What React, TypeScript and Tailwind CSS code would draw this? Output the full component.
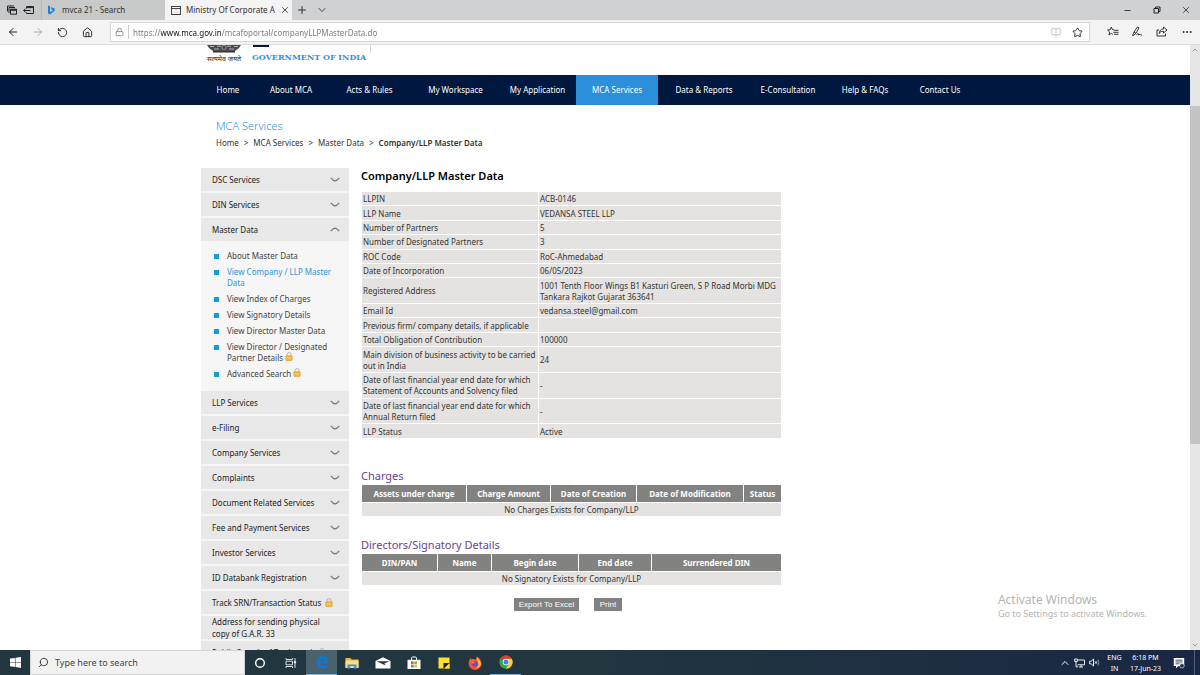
import React, { useState } from 'react';
import {
  ArrowLeft,
  ArrowRight,
  BookOpen,
  ChevronDown,
  ChevronUp,
  Home,
  Lock,
  Minus,
  MoreHorizontal,
  Plus,
  RotateCw,
  Search,
  Star,
  X,
} from 'lucide-react';

const navItems = [
  { label: 'Home', width: 'w-[54px]' },
  { label: 'About MCA', width: 'w-[72px]' },
  { label: 'Acts & Rules', width: 'w-[85px]' },
  { label: 'My Workspace', width: 'w-[87px]' },
  { label: 'My Application', width: 'w-[77px]' },
  { label: 'MCA Services', width: 'w-[82px]', active: true },
  { label: 'Data & Reports', width: 'w-[92px]' },
  { label: 'E-Consultation', width: 'w-[76px]' },
  { label: 'Help & FAQs', width: 'w-[78px]' },
  { label: 'Contact Us', width: 'w-[72px]' },
];

const subItems = [
  { label: 'About Master Data' },
  { label: 'View Company / LLP Master Data', active: true },
  { label: 'View Index of Charges' },
  { label: 'View Signatory Details' },
  { label: 'View Director Master Data' },
  { label: 'View Director / Designated Partner Details', locked: true },
  { label: 'Advanced Search', locked: true },
];

const lowerMenu = [
  'LLP Services',
  'e-Filing',
  'Company Services',
  'Complaints',
  'Document Related Services',
  'Fee and Payment Services',
  'Investor Services',
  'ID Databank Registration',
];

const masterData = [
  ['LLPIN', 'ACB-0146'],
  ['LLP Name', 'VEDANSA STEEL LLP'],
  ['Number of Partners', '5'],
  ['Number of Designated Partners', '3'],
  ['ROC Code', 'RoC-Ahmedabad'],
  ['Date of Incorporation', '06/05/2023'],
  ['Registered Address', '1001 Tenth Floor Wings B1 Kasturi Green, S P Road Morbi MDG Tankara Rajkot Gujarat 363641'],
  ['Email Id', 'vedansa.steel@gmail.com'],
  ['Previous firm/ company details, if applicable', ''],
  ['Total Obligation of Contribution', '100000'],
  ['Main division of business activity to be carried out in India', '24'],
  ['Date of last financial year end date for which Statement of Accounts and Solvency filed', '-'],
  ['Date of last financial year end date for which Annual Return filed', '-'],
  ['LLP Status', 'Active'],
];

const chargeColumns = [
  { label: 'Assets under charge', width: 'w-[104px]' },
  { label: 'Charge Amount', width: 'w-[83px]' },
  { label: 'Date of Creation', width: 'w-[85px]' },
  { label: 'Date of Modification', width: 'w-[106px]' },
  { label: 'Status', width: 'w-[37px]' },
];

const directorColumns = [
  { label: 'DIN/PAN', width: 'w-[75px]' },
  { label: 'Name', width: 'w-[53px]' },
  { label: 'Begin date', width: 'w-[86px]' },
  { label: 'End date', width: 'w-[72px]' },
  { label: 'Surrendered DIN', width: 'w-[129px]' },
];

const Padlock = () => (
  <svg viewBox="0 0 8 9" className="inline-block w-2 h-[9px] shrink-0 align-baseline">
    <path d="M2 4V2.6a2 2 0 0 1 4 0V4" fill="none" stroke="#b9b4a4" strokeWidth="1" />
    <rect x="0.8" y="3.8" width="6.4" height="4.6" rx="0.5" fill="#f3b62f" stroke="#c98d1c" strokeWidth="0.5" />
    <path d="M1.4 5.3h5.2M1.4 6.8h5.2" stroke="#fbdc83" strokeWidth="0.6" />
  </svg>
);

const MenuChevron = ({ up = false }: { up?: boolean }) => (
  <svg viewBox="0 0 10 5" className="w-[10px] h-[5px] shrink-0" fill="none" stroke="#777" strokeWidth="1.2">
    <path d={up ? 'M0.8 4.2Q3 1.4 5 1.2Q7 1.4 9.2 4.2' : 'M0.8 0.8Q3 3.6 5 3.8Q7 3.6 9.2 0.8'} />
  </svg>
);

const TitleBar = () => (
  <div className="flex h-5 shrink-0 bg-[#d0d1d2] text-[8px] text-[#333]">
    <div className="flex w-[41px] items-center justify-around bg-[#c6c8c9] px-1">
      <button aria-label="Tabs you've set aside">
        <svg viewBox="0 0 10 10" className="w-[10px] h-[10px]" fill="none" stroke="#222">
          <path d="M0.5 6.5V1h6.5M2 8V2.5h6" />
          <path d="M3.5 4.2h6v5h-6z" />
          <path d="M3.5 5h6" strokeWidth="1.6" />
        </svg>
      </button>
      <button aria-label="Set these tabs aside">
        <svg viewBox="0 0 11 10" className="w-[11px] h-[10px]" fill="none" stroke="#222">
          <path d="M3.5 3.5V1.5h7v7h-7V7.5M3.5 2.6h7" />
          <path d="M7.5 5.5h-7M2.5 3.7L0.7 5.5l1.8 1.8" />
        </svg>
      </button>
    </div>
    <button className="flex w-[124px] items-center gap-[7px] border-l border-[#b8babb] bg-[#c8caca] px-[5px]">
      <svg viewBox="0 0 8 10" className="w-2 h-[10px]">
        <path d="M1 0.5L3 1.2V7l3.2-1.8-1.6-.8-.9-2.2 4 1.4v2.1L3 9.6 1 8.4z" fill="#1c7fd8" />
      </svg>
      <span>mvca 21 - Search</span>
    </button>
    <div className="flex w-[127px] items-center gap-[5px] bg-[#f3f3f3] px-[6px]">
      <svg viewBox="0 0 10 9" className="w-[10px] h-[9px] shrink-0" fill="none" stroke="#444">
        <rect x="0.5" y="0.5" width="9" height="8" />
        <path d="M0.5 2.5h9" />
      </svg>
      <span className="flex-1 whitespace-nowrap">Ministry Of Corporate A</span>
      <button aria-label="Close tab" className="shrink-0">
        <X className="w-[10px] h-[10px]" strokeWidth={2} />
      </button>
    </div>
    <button aria-label="New tab" className="flex w-5 items-center justify-center">
      <Plus className="w-3 h-3" strokeWidth={2} />
    </button>
    <button aria-label="Tab previews" className="flex w-5 items-center justify-center">
      <ChevronDown className="w-3 h-3" strokeWidth={1.8} />
    </button>
    <div className="ml-auto flex">
      <button aria-label="Minimize" className="flex w-[29px] items-center justify-center">
        <Minus className="w-[9px] h-[9px]" strokeWidth={2.5} />
      </button>
      <button aria-label="Restore" className="flex w-[29px] items-center justify-center">
        <svg viewBox="0 0 8 8" className="w-2 h-2" fill="none" stroke="#222">
          <path d="M1 2.5h4.5V7H1zM2.5 2.3V1H7v4.500H5.700" />
        </svg>
      </button>
      <button aria-label="Close" className="flex w-[29px] items-center justify-center">
        <X className="w-[10px] h-[10px]" strokeWidth={2} />
      </button>
    </div>
  </div>
);

const AddressBar = () => (
  <div className="flex h-[25px] shrink-0 items-center border-b border-[#dcdcdc] bg-[#f3f3f3] text-[#222]">
    <button aria-label="Back" className="flex w-[25px] justify-center">
      <ArrowLeft className="w-3 h-3" strokeWidth={2} />
    </button>
    <button aria-label="Forward" className="flex w-[25px] justify-center text-[#aaa]">
      <ArrowRight className="w-3 h-3" strokeWidth={2} />
    </button>
    <button aria-label="Refresh" className="flex w-[25px] justify-center">
      <RotateCw className="w-[11px] h-[11px] -scale-x-100" strokeWidth={2} />
    </button>
    <button aria-label="Home" className="flex w-[25px] justify-center">
      <Home className="w-[11px] h-[11px]" strokeWidth={2} />
    </button>
    <div className="ml-[10px] flex h-5 flex-1 items-center border border-[#d6d6d6] bg-white">
      <span className="flex w-[18px] justify-center border-r border-[#ccc] py-[2px]">
        <Lock className="w-[9px] h-[10px] text-[#777]" strokeWidth={2} />
      </span>
      <input
        aria-label="Address"
        defaultValue="https://www.mca.gov.in/mcafoportal/companyLLPMasterData.do"
        className="h-4 flex-1 bg-[linear-gradient(90deg,#777_31px,#111_31px,#111_92px,#777_92px)] bg-clip-text px-[4px] text-[8px] text-transparent outline-none"
      />
      <button aria-label="Reading view" className="flex w-5 justify-center text-[#bbb]">
        <BookOpen className="w-[10px] h-[10px]" strokeWidth={2} />
      </button>
      <button aria-label="Add to favorites" className="flex w-[23px] justify-center">
        <Star className="w-[11px] h-[11px]" strokeWidth={2} />
      </button>
    </div>
    <div className="ml-[10px] flex">
      <button aria-label="Favorites" className="flex w-[25px] justify-center">
        <svg viewBox="0 0 12 11" className="w-3 h-[11px]" fill="none" stroke="currentColor" strokeWidth="0.9">
          <path d="M7 3.800L5.400 3.600 4.300 1 3.200 3.700 0.600 4l2 1.900L2 9l2.300-1.600L5.800 8.500M7 4.300h4.500M6.300 6.300h5.200M7 8.300h4.500" />
        </svg>
      </button>
      <button aria-label="Add notes" className="flex w-[24px] justify-center">
        <svg viewBox="0 0 12 11" className="w-3 h-[11px]" fill="none" stroke="currentColor" strokeWidth="0.9">
          <path d="M1.500 9.500L3 6 6.500 0.900 8 1.800 5 7.300 2 9.800zM3 6l2 1.300M5.500 8.800c1.500-2 2.200-1.500 2 .2 1-.9 1.700-.6 3.500.2" />
        </svg>
      </button>
      <button aria-label="Share" className="flex w-[25px] justify-center">
        <svg viewBox="0 0 12 11" className="w-3 h-[11px]" fill="none" stroke="currentColor" strokeWidth="0.9">
          <path d="M3 4H1v6h8.500V7.500M7.500 1l3.500 3-3.500 3V5.200C5 5.200 4 6 3.200 7.500 3.500 4.500 5 3 7.500 2.800z" />
        </svg>
      </button>
      <button aria-label="Settings" className="flex w-[26px] justify-center">
        <MoreHorizontal className="w-3 h-3" strokeWidth={2} />
      </button>
    </div>
  </div>
);

const SiteHeader = () => (
  <header>
    <div className="mx-auto flex h-[30px] max-w-[788px] items-start">
      <div className="flex w-[46px] flex-col items-center">
        <svg viewBox="0 0 36 8" className="w-9 h-2">
          <path d="M1 0h34l-2 3-4 3H7L3 3z" fill="#4a4a4a" />
          <path d="M4 1.500h4M11 1.200h4M21 1.200h4M28 1.500h4M8 4h5M23 4h5" stroke="#ccc" strokeWidth="0.800" />
          <circle cx="18" cy="2.500" r="2" fill="#333" stroke="#ccc" strokeWidth="0.700" />
          <path d="M7 6.800h22" stroke="#222" strokeWidth="1.400" />
        </svg>
        <span className="text-[7px] leading-3 text-[#222]">सत्यमेव जयते</span>
      </div>
      <div className="ml-[5px] w-[118px]">
        <div className="ml-px h-[2px] w-4 bg-[#001840]" />
        <p className="mt-1 whitespace-nowrap font-[DejaVu_Serif,serif] text-[8px] leading-3 font-bold text-[#3c8fd0]">
          GOVERNMENT OF INDIA
        </p>
      </div>
      <div className="h-2 w-px bg-[#ddd]" />
    </div>
    <nav className="bg-[#001740]">
      <div className="mx-auto flex max-w-[788px]">
        {navItems.map((item) => (
          <a
            key={item.label}
            href="#"
            className={`flex h-[30px] shrink-0 items-center justify-center whitespace-nowrap text-[8px] text-white ${item.width} ${
              item.active ? 'bg-[#2b90d9]' : ''
            }`}
          >
            {item.label}
          </a>
        ))}
      </div>
    </nav>
  </header>
);

const menuRow =
  'flex h-[25px] w-full items-center justify-between border-b-2 border-[#f6f6f6] bg-[#e8e8e8] pl-[11px] pr-[9px] text-left text-[8px] text-[#222]';

const Sidebar = () => {
  const [open, setOpen] = useState(true);

  return (
    <aside className="w-[148px] shrink-0 bg-[#f6f6f6]">
      <button className={menuRow}>DSC Services<MenuChevron /></button>
      <button className={menuRow}>DIN Services<MenuChevron /></button>
      <button className={menuRow} onClick={() => setOpen(!open)}>Master Data<MenuChevron up={open} /></button>
      {open && (
        <ul className="flex flex-col gap-[5px] pt-[7px] pb-3 pl-[13px] text-[8px] leading-[11px] text-[#444]">
          {subItems.map((item) => (
            <li key={item.label} className="flex gap-2">
              <span className="mt-[4px] h-[5px] w-[5px] shrink-0 bg-[#1b9ad6]" />
              <a href="#" className={`w-[108px] ${item.active ? 'text-[#2d95d8]' : ''}`}>
                {item.label} {item.locked && <Padlock />}
              </a>
            </li>
          ))}
        </ul>
      )}
      {lowerMenu.map((label) => (
        <button key={label} className={menuRow}>{label}<MenuChevron /></button>
      ))}
      <a href="#" className={menuRow}>
        <span className="flex items-center gap-1 whitespace-nowrap">Track SRN/Transaction Status <Padlock /></span>
      </a>
      <a href="#" className={`${menuRow} leading-3`}>
        <span className="w-[120px]">Address for sending physical copy of G.A.R. 33</span>
      </a>
      <a href="#" className={menuRow}>
        <span className="flex items-center gap-1 whitespace-nowrap">Public Search of Trademark <Padlock /></span>
      </a>
    </aside>
  );
};

interface ResultTableProps {
  title: string;
  columns: { label: string; width: string }[];
  message: string;
}

const ResultTable: React.FC<ResultTableProps> = ({ title, columns, message }) => (
  <section>
    <h3 className="text-[11px] leading-4 text-[#6b3f8c]">{title}</h3>
    <table className="w-full table-fixed border-separate border-spacing-px text-[8px] leading-[11px]">
      <thead>
        <tr>
          {columns.map((col) => (
            <th key={col.label} className={`h-[17px] whitespace-nowrap bg-[#828281] p-0 font-bold text-white ${col.width}`}>
              {col.label}
            </th>
          ))}
        </tr>
      </thead>
      <tbody>
        <tr>
          <td colSpan={5} className="h-[13px] bg-[#e4e3e2] p-0 text-center text-[#333]">{message}</td>
        </tr>
      </tbody>
    </table>
  </section>
);

const MasterData = () => (
  <main className="ml-3 w-[421px] shrink-0">
    <h2 className="text-[11px] leading-4 font-semibold text-black">Company/LLP Master Data</h2>
    <table className="mt-[7px] h-[248px] w-full table-fixed border-separate border-spacing-px text-[8px] leading-[11px] text-[#333]">
      <tbody>
        {masterData.map(([label, value], i) => (
          <tr key={i}>
            <th scope="row" className="w-[176px] bg-[#e4e3e2] py-px pr-0 pl-px text-left font-normal">{label}</th>
            <td className="bg-[#e4e3e2] py-px pr-0 pl-px">{value}</td>
          </tr>
        ))}
      </tbody>
    </table>
    <div className="mt-[29px] flex flex-col gap-5">
      <ResultTable title="Charges" columns={chargeColumns} message="No Charges Exists for Company/LLP" />
      <ResultTable title="Directors/Signatory Details" columns={directorColumns} message="No Signatory Exists for Company/LLP" />
    </div>
    <div className="mt-3 mr-[7px] flex justify-center gap-[15px] font-[Liberation_Sans,sans-serif] text-[8px] text-white">
      <button className="h-[13px] w-[65px] bg-[#828281]">Export To Excel</button>
      <button className="h-[13px] w-[28px] bg-[#828281]">Print</button>
    </div>
  </main>
);

const PageScrollbar = () => (
  <div className="flex w-[10px] shrink-0 flex-col items-center bg-[#e6e6e6]">
    <ChevronUp className="mt-px h-2 w-2 shrink-0 text-[#777]" />
    <div className="mt-[52px] h-[338px] w-full shrink-0 bg-[#c4c4c4]" />
    <ChevronDown className="mt-auto mb-px h-2 w-2 shrink-0 text-[#777]" />
  </div>
);

const TaskIcons = () => (
  <div className="grid w-[276px] grid-cols-9">
    <button aria-label="Cortana" className="flex items-center justify-center">
      <svg viewBox="0 0 12 12" className="w-3 h-3"><circle cx="6" cy="6" r="4.300" fill="none" stroke="#fff" strokeWidth="1.400" /></svg>
    </button>
    <button aria-label="Task view" className="flex items-center justify-center">
      <svg viewBox="0 0 12 12" className="w-3 h-3" fill="none" stroke="#e8ecee" strokeWidth="0.900">
        <path d="M1 1v1.500h6.500V1M1 4.200h6.500v3.600H1zM1 11V9.500h6.500V11M10 1v10" />
        <path d="M9.300 4.500h1.400v1.400H9.300z" fill="#fff" />
      </svg>
    </button>
    <button aria-label="Microsoft Edge" className="flex items-center justify-center border-b border-[#7ab5e2] bg-[#49626c]">
      <svg viewBox="0 0 14 14" className="w-[14px] h-[14px]">
        <path d="M1 6.400C1.600 2.800 4 1 7.200 1 11 1 13 3.700 13 7v1.300H4.800c.2 2 2 2.700 3.700 2.700 1.300 0 2.500-.4 3.500-1v2.500c-1.200.6-2.600.9-4.100.9C4.400 13.400 2 11.500 2 8.500c0-1.900 1-3.400 2.700-4.300C2.900 4.500 1.800 5.300 1 6.400zm3.900-.2h4.700c0-1.500-.8-2.300-2.200-2.300S5.100 4.900 4.900 6.200z" fill="#0f78d4" />
      </svg>
    </button>
    <button aria-label="File Explorer" className="flex items-center justify-center">
      <svg viewBox="0 0 14 12" className="w-[14px] h-3">
        <path d="M0.500 1h5l1 1.500h7V11h-13z" fill="#e9b44c" />
        <path d="M0.500 3.500h13V11h-13z" fill="#fbdc86" />
        <path d="M2.500 11.500V7.500h9v4H9V9.300H5v2.200z" fill="#3b97dc" />
      </svg>
    </button>
    <button aria-label="Mail" className="flex items-center justify-center">
      <svg viewBox="0 0 16 12" className="w-4 h-3">
        <path d="M0.500 4L8 0.300 15.500 4v7.500h-15z" fill="#fff" />
        <path d="M1.500 4.200h13L9.300 6.500l1.500 2z" fill="#21363f" />
      </svg>
    </button>
    <button aria-label="Microsoft Store" className="flex items-center justify-center">
      <svg viewBox="0 0 14 14" className="w-[14px] h-[14px]">
        <path d="M4.500 4V2.200c0-.8.5-1.200 1.200-1.200h2.600c.7 0 1.200.4 1.200 1.200V4" fill="none" stroke="#fff" />
        <path d="M0.500 3.800h13V13h-13z" fill="#fff" />
        <path d="M4 5.500h2.700v2.700H4z" fill="#e8532b" />
        <path d="M7.300 5.500H10v2.700H7.300z" fill="#7cb82f" />
        <path d="M4 8.800h2.700v2.700H4z" fill="#2ba0e0" />
        <path d="M7.300 8.800H10v2.700H7.300z" fill="#f6b91a" />
      </svg>
    </button>
    <button aria-label="Sticky Notes" className="flex items-center justify-center">
      <svg viewBox="0 0 12 12" className="w-3 h-3">
        <path d="M0.500 0.500h11v11h-11z" fill="#fbe32c" />
        <path d="M5.500 6h6L6 11.500H5.500z" fill="#222" />
        <path d="M7 11.500L11.500 7v4.500z" fill="#fbe32c" />
      </svg>
    </button>
    <button aria-label="Firefox" className="flex items-center justify-center">
      <svg viewBox="0 0 14 14" className="w-[14px] h-[14px]">
        <path d="M9 0.500c2.600 1.700 4.600 4 4.600 7A6.500 6.500 0 0 1 .6 7.500C.6 5 1.500 3.300 2.800 2l.7 1.300C5.500 2.600 7 3 8.500 4 8 2.800 8.200 1.500 9 .5z" fill="#f9512f" />
        <path d="M9.300 1.200c2 2.400 3.700 4 3.500 6.800-.2 2.700-2.800 4.300-5 4.300 2.700-1.800 3.700-5 1-8.300-.4-.9 0-2 .5-2.800z" fill="#ffc53a" />
        <circle cx="7" cy="7.800" r="2.900" fill="#7d42d4" />
        <path d="M3.500 4.800C5 4.500 6.500 5.300 7 6.300c-1.300 0-1.800.7-1.500 1.700-1.500-.5-2.300-1.800-2-3.200z" fill="#ff8c25" />
      </svg>
    </button>
    <button aria-label="Google Chrome" className="flex items-center justify-center border-b border-[#7ab5e2]">
      <svg viewBox="0 0 14 14" className="w-[14px] h-[14px]">
        <path d="M7 7L1.200 3.600A6.700 6.700 0 0 1 12.800 3.700H7z" fill="#e33b2e" />
        <path d="M7 7L1.200 3.600A6.700 6.700 0 0 0 6.700 13.700L9.900 8.600z" fill="#2da94f" />
        <path d="M7 3.700h5.800A6.700 6.700 0 0 1 6.700 13.700L9.900 8.600z" fill="#fdce2e" />
        <circle cx="7" cy="7" r="3.300" fill="#fff" />
        <circle cx="7" cy="7" r="2.500" fill="#3f80ea" />
      </svg>
    </button>
  </div>
);

const Taskbar = () => (
  <footer className="flex h-[25px] shrink-0 bg-linear-to-r from-[#21363f] via-[#21363f] to-[#1a2744]">
    <button aria-label="Start" className="flex w-[30px] items-center justify-center">
      <svg viewBox="0 0 10 10" className="w-[11px] h-[11px]" fill="#fff">
        <path d="M0 1.400L4.500.8v3.900H0zM5 .7L10 0v4.700H5zM0 5.200h4.500v3.900L0 8.500zM5 5.200h5V10l-5-.8z" />
      </svg>
    </button>
    <label className="flex w-[215px] items-center gap-[6px] border border-[#d4d4d4] bg-[#f2f2f2] pl-[7px] text-[#333]">
      <Search className="w-[11px] h-[11px] shrink-0 -scale-x-100" strokeWidth={2} />
      <input
        type="text"
        aria-label="Search"
        placeholder="Type here to search"
        className="w-full text-[9px] outline-none placeholder:text-[#444]"
      />
    </label>
    <TaskIcons />
    <div className="ml-auto flex items-center text-center text-[7px] leading-[11px] text-white">
      <button aria-label="Show hidden icons" className="flex w-[15px] justify-center">
        <ChevronUp className="w-3 h-3" strokeWidth={2} />
      </button>
      <button aria-label="Network" className="flex w-[15px] justify-center">
        <svg viewBox="0 0 11 10" className="w-[11px] h-[10px]" fill="none" stroke="#fff" strokeWidth="0.900">
          <path d="M3.500 2h7v4.800h-7M5 9h4M7 6.800V9M0.700 1h2.600v2.500H.7zM2 3.500v5.300h2" />
        </svg>
      </button>
      <button aria-label="Volume" className="flex w-[15px] justify-center">
        <svg viewBox="0 0 11 9" className="w-[11px] h-[9px]" fill="none" stroke="#fff" strokeWidth="0.900">
          <path d="M0.600 3.200h1.500L4.500 1v7L2.100 5.800H.6zM6 3.300l2 2.400M8 3.300L6 5.700" />
          <path d="M9 1.500q1.500 3 0 6" stroke="#8b98a5" />
        </svg>
      </button>
      <button className="w-[25px]">ENG<br />IN</button>
      <button className="w-[37px]">6:18 PM<br />17-Jun-23</button>
      <button aria-label="Notifications" className="flex w-[30px] justify-center">
        <svg viewBox="0 0 12 12" className="w-3 h-3">
          <path d="M0.800 1h10.400v8H5.500L3 11.300V9H.8z" fill="#fff" />
          <path d="M2.500 3.200h7M2.500 5h7M2.500 6.800h4" stroke="#1b2942" strokeWidth="0.800" />
          <circle cx="9" cy="8.800" r="2.200" fill="#1b2942" stroke="#fff" strokeWidth="0.600" />
        </svg>
      </button>
      <div className="h-[25px] w-[6px] border-l border-[#52607a]" />
    </div>
  </footer>
);

export default function App() {
  return (
    <div className="relative flex h-screen flex-col overflow-hidden bg-white font-[Noto_Sans,Open_Sans,sans-serif]">
      <TitleBar />
      <AddressBar />
      <div className="flex min-h-0 flex-1">
        <div className="min-w-0 flex-1 overflow-hidden">
          <SiteHeader />
          <div className="mx-auto max-w-[788px]">
            <div className="pt-[13px] pl-[15px]">
              <h1 className="text-[11px] leading-4 font-light text-[#2d95d8]">MCA Services</h1>
              <p className="mt-[3px] flex gap-[5px] text-[8px] leading-3 text-[#333]">
                <a href="#">Home</a>
                <span>&gt;</span>
                <a href="#">MCA Services</a>
                <span>&gt;</span>
                <a href="#">Master Data</a>
                <span>&gt;</span>
                <span className="font-semibold">Company/LLP Master Data</span>
              </p>
            </div>
            <div className="mt-[19px] flex items-start">
              <Sidebar />
              <MasterData />
            </div>
          </div>
        </div>
        <PageScrollbar />
      </div>
      <div className="pointer-events-none absolute right-[53px] bottom-[55px] text-[#b4b4b4]">
        <p className="text-[12px] leading-4">Activate Windows</p>
        <p className="text-[9px] leading-3">Go to Settings to activate Windows.</p>
      </div>
      <Taskbar />
    </div>
  );
}
